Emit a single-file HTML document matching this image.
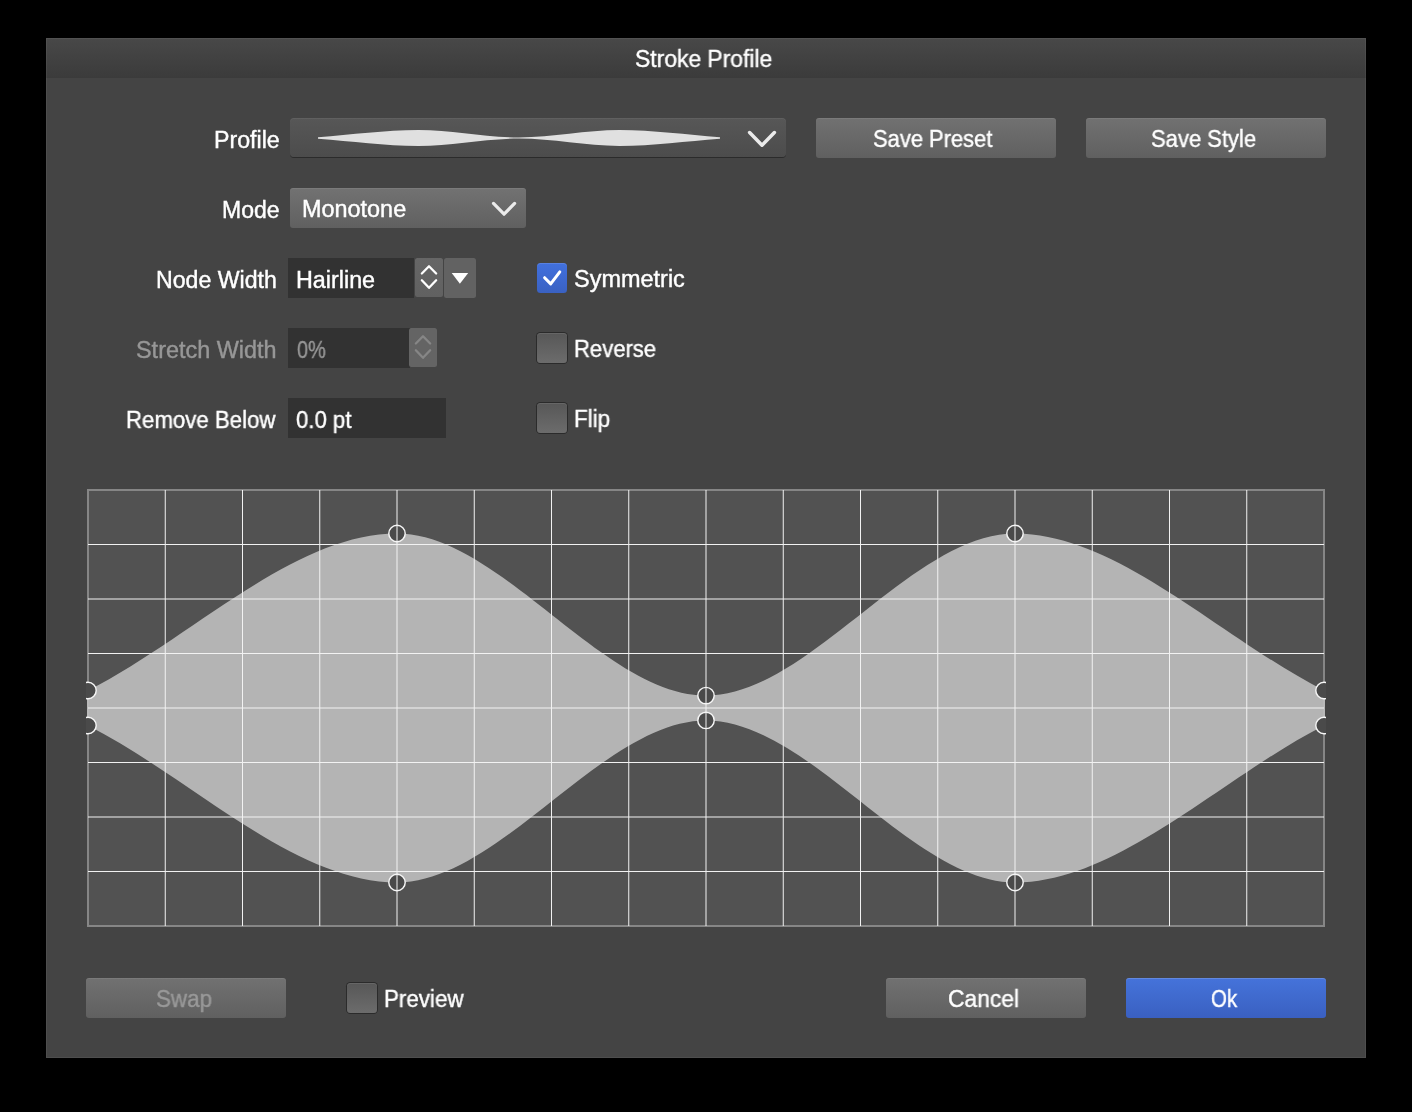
<!DOCTYPE html>
<html><head><meta charset="utf-8"><title>Stroke Profile</title>
<style>
html,body{margin:0;padding:0;background:#000;}
body{width:1412px;height:1112px;position:relative;overflow:hidden;font-family:"Liberation Sans",sans-serif;}
.abs{position:absolute;box-sizing:border-box;}
#dlg{left:46px;top:38px;width:1320px;height:1020px;background:#444444;}
#dlgb{left:46px;top:38px;width:1320px;height:1020px;box-shadow:inset 0 0 0 1px rgba(255,255,255,0.055);pointer-events:none;}
#title{left:46px;top:38px;width:1320px;height:40px;background:linear-gradient(#484848,#3b3b3b);}
.btn{height:40px;border-radius:3px;background:linear-gradient(#717171,#606060);box-shadow:inset 0 1px 0 rgba(255,255,255,0.07);}
.btn.blue{background:linear-gradient(#4573da,#3a60c1);box-shadow:inset 0 1px 0 rgba(255,255,255,0.16);}
.drop{height:40px;border-radius:3px;background:linear-gradient(#727272,#606060);box-shadow:inset 0 1px 0 rgba(255,255,255,0.07);}
.pdrop{height:39px;border-radius:4px;background:linear-gradient(#575757,#4c4c4c);box-shadow:0 1px 0 #2b2b2b, inset 0 1px 0 rgba(255,255,255,0.06);}
.inp{height:40px;background:#323232;}
.step{height:39px;border-radius:2.5px;background:linear-gradient(#666666,#616161);}
.chk{width:30px;height:30px;border-radius:3.5px;background:linear-gradient(#575757,#6c6c6c);box-shadow:0 0 0 1px #2b2b2b, inset 0 1px 0 rgba(255,255,255,0.09);}
.chk.on{background:linear-gradient(#4170de,#3a61c2);box-shadow:inset 0 1px 0 rgba(255,255,255,0.12);}
.t{position:absolute;line-height:1;white-space:nowrap;transform-origin:0 0;display:block;will-change:transform;-webkit-text-stroke:0.4px currentColor;}
svg{position:absolute;left:0;top:0;}
</style></head><body>
<div class="abs" id="dlg"></div>
<div class="abs" id="title"></div>
<div class="abs" id="dlgb"></div>

<div class="abs pdrop" style="left:290px;top:118px;width:496px"></div>
<div class="abs btn" style="left:816px;top:118px;width:240px"></div>
<div class="abs btn" style="left:1086px;top:118px;width:240px"></div>
<div class="abs drop" style="left:290px;top:188px;width:236px"></div>

<div class="abs inp" style="left:288px;top:258px;width:126px"></div>
<div class="abs step" style="left:415px;top:258px;width:28px"></div>
<div class="abs step" style="left:444px;top:258px;width:32px;height:40px;background:#626262"></div>
<div class="abs inp" style="left:288px;top:328px;width:122px"></div>
<div class="abs step" style="left:409px;top:328px;width:28px;background:#646464"></div>
<div class="abs inp" style="left:288px;top:398px;width:158px"></div>

<div class="abs chk on" style="left:537px;top:263px"></div>
<div class="abs chk" style="left:537px;top:333px"></div>
<div class="abs chk" style="left:537px;top:403px"></div>
<div class="abs chk" style="left:347px;top:983px"></div>

<div class="abs btn" style="left:86px;top:978px;width:200px"></div>
<div class="abs btn" style="left:886px;top:978px;width:200px"></div>
<div class="abs btn blue" style="left:1126px;top:978px;width:200px"></div>

<svg width="1412" height="1112" viewBox="0 0 1412 1112">
 <!-- profile preview -->
 <path d="M318.00,137.20 C351.50,134.80 385.00,130.00 418.50,130.00 C452.00,130.00 485.50,137.43 519.00,137.43 C552.50,137.43 586.00,130.00 619.50,130.00 C653.00,130.00 686.50,134.80 720.00,137.20 L720.00,138.80 C686.50,141.20 653.00,146.00 619.50,146.00 C586.00,146.00 552.50,138.57 519.00,138.57 C485.50,138.57 452.00,146.00 418.50,146.00 C385.00,146.00 351.50,141.20 318.00,138.80 Z" fill="#e0e0e0"/>
 <!-- chevrons -->
 <g fill="none" stroke="#ebebeb" stroke-linecap="round" stroke-linejoin="round">
  <path d="M749.6,132.5 L762,145.2 L774.4,132.5" stroke-width="3.5"/>
  <path d="M493.5,203.4 L504.05,214.2 L514.6,203.4" stroke-width="3.2"/>
 </g>
 <!-- steppers -->
 <g fill="none" stroke="#ffffff" stroke-width="2.3" stroke-linecap="round" stroke-linejoin="round">
  <path d="M421.85,273.5 L429,266.3 L436.15,273.5"/>
  <path d="M421.85,280.3 L429,287.8 L436.15,280.3"/>
 </g>
 <g fill="none" stroke="#868686" stroke-width="2.3" stroke-linecap="round" stroke-linejoin="round">
  <path d="M415.85,343.5 L423,336.3 L430.15,343.5"/>
  <path d="M415.85,350.3 L423,357.8 L430.15,350.3"/>
 </g>
 <path d="M451.7,273.1 L468.2,273.1 L459.9,283.8 Z" fill="#ffffff"/>
 <!-- check -->
 <path d="M544.6,277.7 L550.7,283.9 L559.8,271.9" fill="none" stroke="#fff" stroke-width="3" stroke-linecap="round" stroke-linejoin="round"/>
</svg>

<svg style="left:86px;top:488px" width="1240" height="440" viewBox="86 488 1240 440">
 <rect x="88" y="490" width="1236" height="436" fill="#525252"/>
 <rect x="88" y="490" width="1236" height="436" fill="none" stroke="#868686" stroke-width="2"/>
 <path d="M87,690.5 L88,690.5 C191,638.17 294,533.5 397,533.5 C500,533.5 603,695.6 706,695.6 C809,695.6 912,533.5 1015,533.5 C1118,533.5 1221,638.17 1324,690.5 L1325,690.5 L1325,725.5 L1324,725.5 C1221,777.83 1118,882.5 1015,882.5 C912,882.5 809,720.4 706,720.4 C603,720.4 500,882.5 397,882.5 C294,882.5 191,777.83 88,725.5 L87,725.5 Z" fill="rgb(191,191,191)" fill-opacity="0.9"/>
 <g fill="#4a4a4a" stroke="#f6f6f6" stroke-width="1.45"><circle cx="88" cy="690.5" r="8.2"/><circle cx="88" cy="725.5" r="8.2"/><circle cx="397" cy="533.5" r="8.2"/><circle cx="397" cy="882.5" r="8.2"/><circle cx="706" cy="695.6" r="8.2"/><circle cx="706" cy="720.4" r="8.2"/><circle cx="1015" cy="533.5" r="8.2"/><circle cx="1015" cy="882.5" r="8.2"/><circle cx="1324" cy="690.5" r="8.2"/><circle cx="1324" cy="725.5" r="8.2"/></g>
 <g stroke="#f2f2f2" stroke-width="1"><line x1="165.25" y1="490" x2="165.25" y2="926"/><line x1="242.5" y1="490" x2="242.5" y2="926"/><line x1="319.75" y1="490" x2="319.75" y2="926"/><line x1="397.0" y1="490" x2="397.0" y2="926"/><line x1="474.25" y1="490" x2="474.25" y2="926"/><line x1="551.5" y1="490" x2="551.5" y2="926"/><line x1="628.75" y1="490" x2="628.75" y2="926"/><line x1="706.0" y1="490" x2="706.0" y2="926"/><line x1="783.25" y1="490" x2="783.25" y2="926"/><line x1="860.5" y1="490" x2="860.5" y2="926"/><line x1="937.75" y1="490" x2="937.75" y2="926"/><line x1="1015.0" y1="490" x2="1015.0" y2="926"/><line x1="1092.25" y1="490" x2="1092.25" y2="926"/><line x1="1169.5" y1="490" x2="1169.5" y2="926"/><line x1="1246.75" y1="490" x2="1246.75" y2="926"/><line x1="88" y1="544.5" x2="1324" y2="544.5"/><line x1="88" y1="599.0" x2="1324" y2="599.0"/><line x1="88" y1="653.5" x2="1324" y2="653.5"/><line x1="88" y1="708.0" x2="1324" y2="708.0"/><line x1="88" y1="762.5" x2="1324" y2="762.5"/><line x1="88" y1="817.0" x2="1324" y2="817.0"/><line x1="88" y1="871.5" x2="1324" y2="871.5"/></g>
</svg>

<span class="t" style="left:635.13px;top:47.77px;font-size:23.0px;color:#ffffff;transform:scaleX(0.9943)">Stroke Profile</span>
<span class="t" style="left:213.94px;top:128.77px;font-size:23.0px;color:#ffffff;transform:scaleX(1.0084)">Profile</span>
<span class="t" style="left:222.06px;top:198.77px;font-size:23.0px;color:#ffffff;transform:scaleX(0.9960)">Mode</span>
<span class="t" style="left:301.82px;top:197.77px;font-size:23.0px;color:#ffffff;transform:scaleX(1.0183)">Monotone</span>
<span class="t" style="left:873.47px;top:127.77px;font-size:23.0px;color:#ffffff;transform:scaleX(0.9530)">Save Preset</span>
<span class="t" style="left:1151.27px;top:127.77px;font-size:23.0px;color:#ffffff;transform:scaleX(0.9558)">Save Style</span>
<span class="t" style="left:155.64px;top:268.77px;font-size:23.0px;color:#ffffff;transform:scaleX(1.0056)">Node Width</span>
<span class="t" style="left:295.63px;top:268.77px;font-size:23.0px;color:#ffffff;transform:scaleX(1.0144)">Hairline</span>
<span class="t" style="left:135.80px;top:338.77px;font-size:23.0px;color:#979797;transform:scaleX(1.0184)">Stretch Width</span>
<span class="t" style="left:296.63px;top:338.77px;font-size:23.0px;color:#979797;transform:scaleX(0.8657)">0%</span>
<span class="t" style="left:125.50px;top:408.77px;font-size:23.0px;color:#ffffff;transform:scaleX(0.9665)">Remove Below</span>
<span class="t" style="left:296.47px;top:408.77px;font-size:23.0px;color:#ffffff;transform:scaleX(0.9636)">0.0 pt</span>
<span class="t" style="left:573.80px;top:267.77px;font-size:23.0px;color:#ffffff;transform:scaleX(1.0206)">Symmetric</span>
<span class="t" style="left:573.52px;top:337.77px;font-size:23.0px;color:#ffffff;transform:scaleX(0.9589)">Reverse</span>
<span class="t" style="left:573.69px;top:407.77px;font-size:23.0px;color:#ffffff;transform:scaleX(0.9759)">Flip</span>
<span class="t" style="left:155.65px;top:987.77px;font-size:23.0px;color:#999999;transform:scaleX(0.9734)">Swap</span>
<span class="t" style="left:383.59px;top:987.77px;font-size:23.0px;color:#ffffff;transform:scaleX(0.9721)">Preview</span>
<span class="t" style="left:948.17px;top:987.77px;font-size:23.0px;color:#ffffff;transform:scaleX(0.9911)">Cancel</span>
<span class="t" style="left:1211.05px;top:987.77px;font-size:23.0px;color:#ffffff;transform:scaleX(0.8867)">Ok</span>
</body></html>
